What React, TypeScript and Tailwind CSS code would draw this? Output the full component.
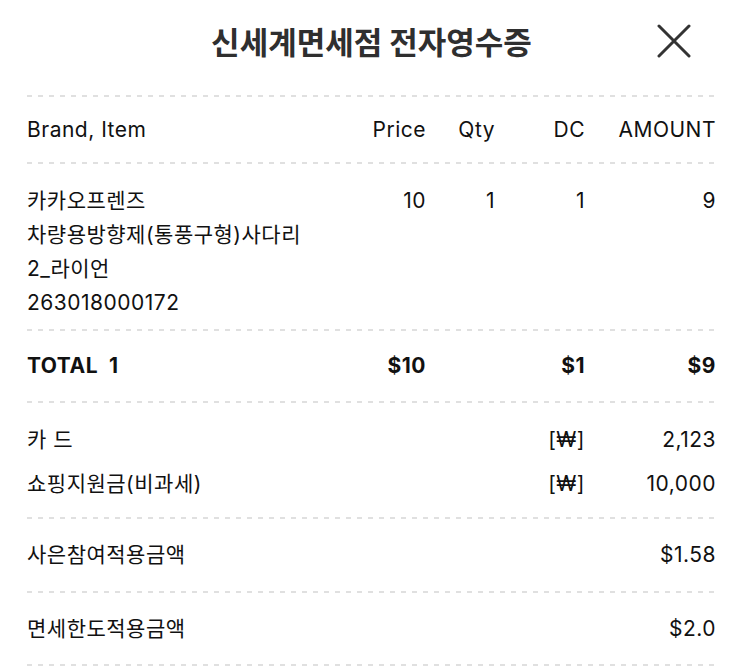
import React from 'react';

const Dashed: React.FC = () => (
    <div className="h-[2px] w-full bg-[linear-gradient(to_right,#e0e0e0_5px,transparent_5px)] bg-[length:11px_2px]" />
);

const cols = 'grid grid-cols-[1fr_70px_69px_90px_131px]';

const App: React.FC = () => {
    const payments = [
        { label: '카 드', amount: '2,123' },
        { label: '쇼핑지원금(비과세)', amount: '10,000' },
    ];

    return (
        <div className="w-[743px] h-[667px] bg-white text-[#111] font-['Inter','Noto_Sans_CJK_KR',sans-serif] overflow-hidden">
            {/* Header */}
            <div className="grid grid-cols-[1fr_auto_1fr] items-center h-[80px] pt-[2px]">
                <div />
                <h1 className="text-[31px] font-bold text-[#2f2f2f] font-['Noto_Sans_CJK_KR',sans-serif]">신세계면세점 전자영수증</h1>
                <div className="flex justify-end pr-[52px]">
                    <svg width="34" height="34" viewBox="0 0 34 34" fill="none" stroke="#333" strokeWidth="3" strokeLinecap="round">
                        <path d="M2 2L32 32M32 2L2 32" />
                    </svg>
                </div>
            </div>

            <div className="px-[27px] pt-[15px] text-[21px] tracking-[0.5px]">
                <Dashed />
                {/* Column header */}
                <div className={`${cols} items-center h-[65px] text-right`}>
                    <span className="text-left">Brand, Item</span>
                    <span>Price</span>
                    <span>Qty</span>
                    <span>DC</span>
                    <span>AMOUNT</span>
                </div>
                <Dashed />

                {/* Item */}
                <div className={`${cols} pt-[20px] pb-[9px] leading-[34px] text-right`}>
                    <div className="text-left">
                        <div>카카오프렌즈</div>
                        <div>차량용방향제(통풍구형)사다리</div>
                        <div>2_라이언</div>
                        <div>263018000172</div>
                    </div>
                    <span>10</span>
                    <span>1</span>
                    <span>1</span>
                    <span>9</span>
                </div>
                <Dashed />

                {/* Total */}
                <div className={`${cols} items-center h-[70px] font-bold text-right`}>
                    <span className="text-left whitespace-pre">TOTAL  1</span>
                    <span>$10</span>
                    <span />
                    <span>$1</span>
                    <span>$9</span>
                </div>
                <Dashed />

                {/* Payments */}
                <div className="pt-[15px] pb-[11px]">
                    {payments.map((p) => (
                        <div key={p.label} className={`${cols} h-[44px] items-center text-right`}>
                            <span className="text-left">{p.label}</span>
                            <span />
                            <span />
                            <span>[₩]</span>
                            <span>{p.amount}</span>
                        </div>
                    ))}
                </div>
                <Dashed />

                <div className="flex justify-between items-center h-[72px]">
                    <span>사은참여적용금액</span>
                    <span>$1.58</span>
                </div>
                <Dashed />
                <div className="flex justify-between items-center h-[71px]">
                    <span>면세한도적용금액</span>
                    <span>$2.0</span>
                </div>
                <Dashed />
            </div>
        </div>
    );
};

export default App;
